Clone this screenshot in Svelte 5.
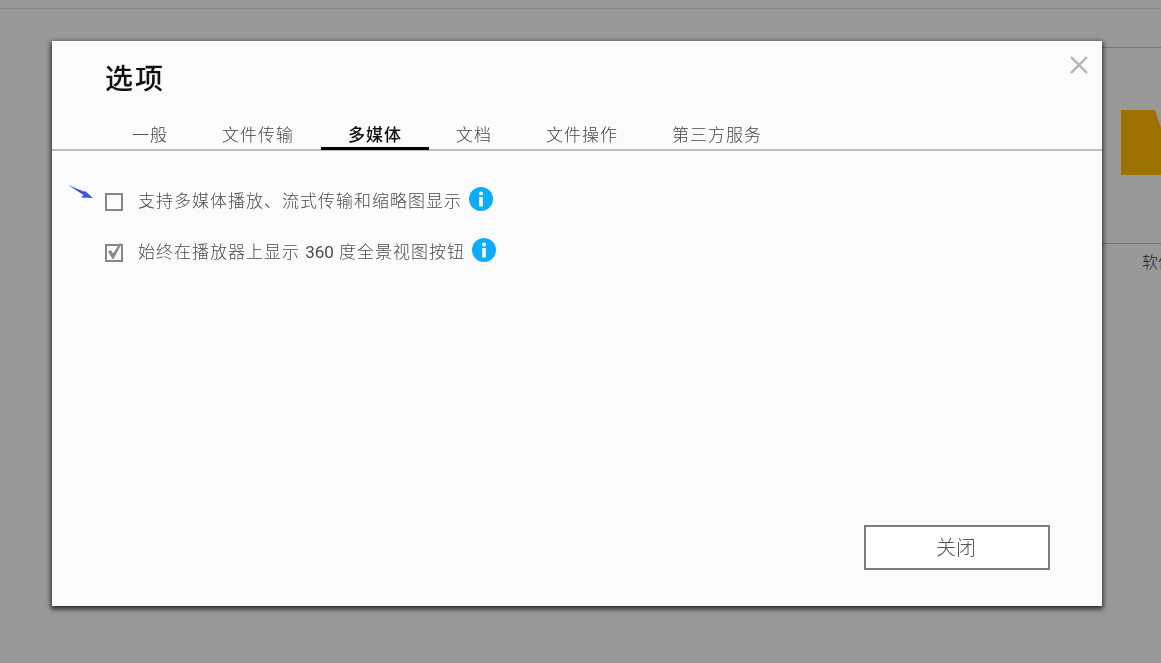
<script lang="ts">
  const tabs = ['一般', '文件传输', '多媒体', '文档', '文件操作', '第三方服务']
  let active = $state('多媒体')

  const options = [
    { label: '支持多媒体播放、流式传输和缩略图显示', num: '', rest: '', checked: false },
    { label: '始终在播放器上显示 ', num: '360', rest: ' 度全景视图按钮', checked: true },
  ]
</script>

<div class="page">
  <div class="top-line"></div>
  <div class="behind">
    <div class="folder"></div>
    <div class="behind-label">软件</div>
  </div>
</div>

<div class="overlay">
  <div class="modal">
    <button class="close" aria-label="关闭">
      <svg width="20" height="20" viewBox="0 0 20 20">
        <path d="M2 2 L18 18 M18 2 L2 18" stroke="#b4b4b4" stroke-width="2.4" fill="none" />
      </svg>
    </button>
    <h1>选项</h1>
    <nav class="tabs">
      {#each tabs as tab}
        <button class="tab" class:active={tab === active} onclick={() => (active = tab)}>{tab}</button>
      {/each}
    </nav>
    <div class="body">
      {#each options as opt, i}
        <div class="row">
          {#if i === 0}
            <svg class="arrow" width="28" height="16" viewBox="0 0 28 16">
              <path d="M1 0 L18 7 L17 5 L26 13 L14 12.5 L16.5 10 Z" fill="#3f55d6" />
            </svg>
          {/if}
          <span class="check">
            {#if opt.checked}
              <svg width="18" height="18" viewBox="0 0 18 18">
                <path d="M3 7.5 L6 6 L8 9.5 L15 -1 L16.5 0 L8.5 15 L7.5 15 Z" fill="#8a8a8a" />
              </svg>
            {/if}
          </span>
          <span class="label">{opt.label}<span class="num">{opt.num}</span>{opt.rest}</span>
          <svg class="info" width="24" height="24" viewBox="0 0 24 24">
            <circle cx="12" cy="12" r="12" fill="#0cacfa" />
            <circle cx="12" cy="6.5" r="2" fill="#fff" />
            <rect x="10.2" y="10" width="3.6" height="9.5" fill="#fff" />
          </svg>
        </div>
      {/each}
    </div>
    <div class="footer">
      <button class="btn">关闭</button>
    </div>
  </div>
</div>

<style>
  :global(body) {
    background: #999;
    font-family: Roboto, 'Noto Sans CJK SC', sans-serif;
  }

  .page {
    height: 663px;
    overflow: hidden;
    display: flex;
    flex-direction: column;
    align-items: flex-end;
    background: #999;
  }

  .top-line {
    align-self: stretch;
    height: 1px;
    margin-top: 8px;
    background: #8a8a8a;
  }

  .behind {
    width: 59px;
    height: 197px;
    margin-top: 38px;
    padding: 62px 0 0 19px;
    box-sizing: border-box;
    border-top: 1px solid #7a7a7a;
    border-bottom: 1px solid #737373;
    position: relative;
  }

  .folder {
    width: 40px;
    height: 65px;
    background: #9e7200;
    clip-path: polygon(0 0, 34px 0, 40px 18px, 40px 65px, 0 65px);
  }

  .behind-label {
    position: absolute;
    top: 201px;
    left: 40px;
    font-size: 16px;
    white-space: nowrap;
    color: #222;
    font-weight: 300;
  }

  .overlay {
    position: fixed;
    inset: 0;
    padding: 41px 0 0 52px;
  }

  .modal {
    position: relative;
    width: 1050px;
    height: 565px;
    background: #fbfbfb;
    box-shadow: 0 2px 5px 1px rgba(0, 0, 0, 0.75);
    display: flex;
    flex-direction: column;
  }

  .close {
    position: absolute;
    top: 14px;
    right: 13px;
    width: 20px;
    height: 20px;
    padding: 0;
    border: none;
    background: none;
    display: flex;
  }

  h1 {
    margin: 20px 0 0 53px;
    font-size: 28px;
    line-height: 38px;
    font-weight: 500;
    letter-spacing: 2px;
    color: #111;
  }

  .tabs {
    display: flex;
    margin-top: 18px;
    padding-left: 53px;
    height: 34px;
    box-sizing: border-box;
    border-bottom: 2px solid #bdbdbd;
  }

  .tab {
    height: 33px;
    padding: 3px 27px 0;
    border: none;
    background: none;
    font-family: inherit;
    font-size: 17px;
    letter-spacing: 1px;
    font-weight: 300;
    color: #444;
    white-space: nowrap;
    line-height: 30px;
  }

  .tab.active {
    color: #111;
    font-weight: 500;
    border-bottom: 3px solid #000;
  }

  .body {
    flex: 1;
    padding: 36px 0 0 53px;
    display: flex;
    flex-direction: column;
    gap: 25px;
  }

  .row {
    position: relative;
    display: flex;
    align-items: center;
    height: 26px;
  }

  .arrow {
    position: absolute;
    left: -38px;
    top: -2px;
  }

  .check {
    width: 18px;
    height: 18px;
    box-sizing: border-box;
    border: 2px solid #858585;
    background: #fbfbfb;
    margin-top: 4px;
    display: flex;
    align-items: center;
    justify-content: center;
    overflow: visible;
  }

  .check svg {
    flex: none;
    overflow: visible;
  }

  .label {
    margin-left: 15px;
    margin-top: -2px;
    font-size: 17px;
    letter-spacing: 1px;
    font-weight: 300;
    color: #4a4a4a;
    white-space: nowrap;
  }

  .num {
    font-weight: 400;
    letter-spacing: 0;
  }

  .info {
    margin-left: 7px;
    margin-top: -2px;
    flex: none;
  }

  .footer {
    display: flex;
    justify-content: flex-end;
    padding: 0 52px 36px 0;
  }

  .btn {
    width: 186px;
    height: 45px;
    padding: 0 2px 2px 0;
    background: #fff;
    border: 2px solid #7e7e7e;
    font-family: inherit;
    font-size: 20px;
    font-weight: 300;
    color: #555;
  }
</style>
